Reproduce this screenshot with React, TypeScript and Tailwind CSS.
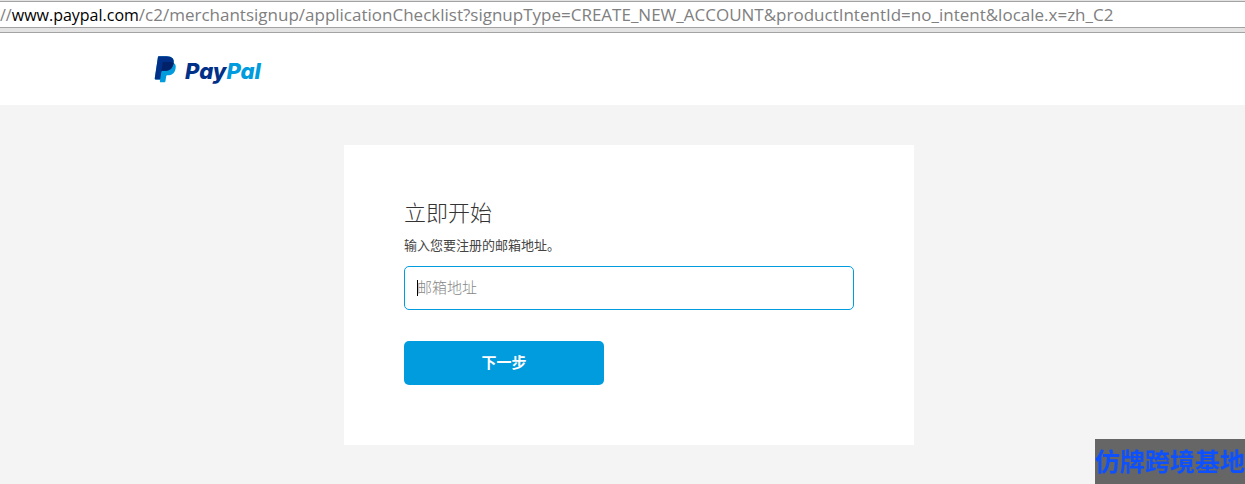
import React, { useState } from "react";

function AddressBar() {
  return (
    <div className="h-[33px] border-b border-[#a3a3a3] bg-[#e3e3e3] pt-px">
      <div className="h-[27px] overflow-hidden whitespace-nowrap border-y border-[#a3a3a3] bg-white font-['Open_Sans',sans-serif] text-[17px] leading-[25px] text-[#808080]">
        <span className="text-[16px]">
          //<span className="text-black">www.paypal.com</span>
        </span>
        <span>
          /c2/merchantsignup/applicationChecklist?signupType=CREATE_NEW_ACCOUNT&amp;productIntentId=no_intent&amp;locale.x=zh_C2
        </span>
      </div>
    </div>
  );
}

function PayPalMark() {
  return (
    <svg viewBox="1 0 23 28" className="h-[27px] w-[23px]" aria-hidden="true">
      <path
        fill="#009cde"
        d="M20.924 7.157C21.204 5.057 20.924 3.657 19.801 2.357C18.583.957 16.43.257 13.716.257H5.758C5.29.257 4.729.757 4.634 1.257L1.358 23.457C1.358 23.857 1.639 24.357 2.107 24.357H6.975L6.694 26.557C6.6 26.957 6.881 27.257 7.255 27.257H11.375C11.844 27.257 12.311 26.957 12.405 26.457V26.157L13.247 20.957V20.757C13.341 20.257 13.809 19.857 14.277 19.857H14.84C18.864 19.857 21.954 18.157 22.89 13.157C23.358 11.057 23.172 9.357 22.048 8.157C21.767 7.757 21.298 7.457 20.924 7.157Z"
      />
      <path
        fill="#003087"
        d="M20.924 7.157C21.204 5.057 20.924 3.657 19.801 2.357C18.583.957 16.43.257 13.716.257H5.758C5.29.257 4.729.757 4.634 1.257L1.358 23.457C1.358 23.857 1.639 24.357 2.107 24.357H6.975L8.192 16.357C8.286 15.757 8.754 15.357 9.315 15.357H11.655C16.243 15.357 19.801 13.357 20.924 7.157Z"
      />
      <path
        fill="#012169"
        d="M9.504 7.157C9.596 6.757 10.065 6.257 10.626 6.257H16.899C18.4 6.257 19.9 6.557 20.924 7.157C19.801 13.357 16.243 15.357 11.655 15.357H9.315C8.754 15.357 8.286 15.757 8.192 16.357Z"
      />
    </svg>
  );
}

function Header() {
  return (
    <header className="flex h-[72px] items-center bg-white pl-[154px]">
      <a href="#" className="flex items-end gap-2">
        <PayPalMark />
        <span className="font-['Inter',sans-serif] text-[22px] leading-6 font-extrabold text-[#003087] italic [font-feature-settings:'cv11']">
          Pay<span className="text-[#009cde]">Pal</span>
        </span>
      </a>
    </header>
  );
}

function SignupForm() {
  const [email, setEmail] = useState("");

  return (
    <form
      onSubmit={(e) => e.preventDefault()}
      className="w-full max-w-[570px] bg-white px-[60px] pt-[53px] pb-[60px]"
    >
      <h1 className="text-[22px] leading-8 font-light text-[#333]">立即开始</h1>
      <label
        htmlFor="email"
        className="mt-1 block text-[13px] leading-6 text-[#444]"
      >
        输入您要注册的邮箱地址。
      </label>
      <div className="relative mt-2">
        <input
          id="email"
          type="email"
          placeholder="邮箱地址"
          value={email}
          onChange={(e) => setEmail(e.target.value)}
          className="block h-11 w-full rounded-[5px] border border-[#009cde] bg-white px-3 pb-0.5 text-[15px] font-light text-[#333] outline-none placeholder:text-[#888]"
        />
        {email === "" && (
          <span className="pointer-events-none absolute top-3.5 left-[13px] h-4 w-px bg-black" />
        )}
      </div>
      <button
        type="submit"
        className="mt-[31px] block h-11 w-[200px] rounded-[5px] bg-[#009cde] text-[15px] font-bold text-white"
      >
        下一步
      </button>
    </form>
  );
}

export default function App() {
  return (
    <div className="flex min-h-screen flex-col bg-[#f4f4f4] font-['Liberation_Sans','Noto_Sans_CJK_SC',sans-serif]">
      <AddressBar />
      <Header />
      <main className="flex grow items-start justify-center pt-10 pb-[39px] pl-[13px]">
        <SignupForm />
      </main>
      <div className="fixed right-0 bottom-0 h-[45px] bg-[#666] text-[25px] leading-[47px] font-bold whitespace-nowrap text-[#0c50ff]">
        仿牌跨境基地
      </div>
    </div>
  );
}
